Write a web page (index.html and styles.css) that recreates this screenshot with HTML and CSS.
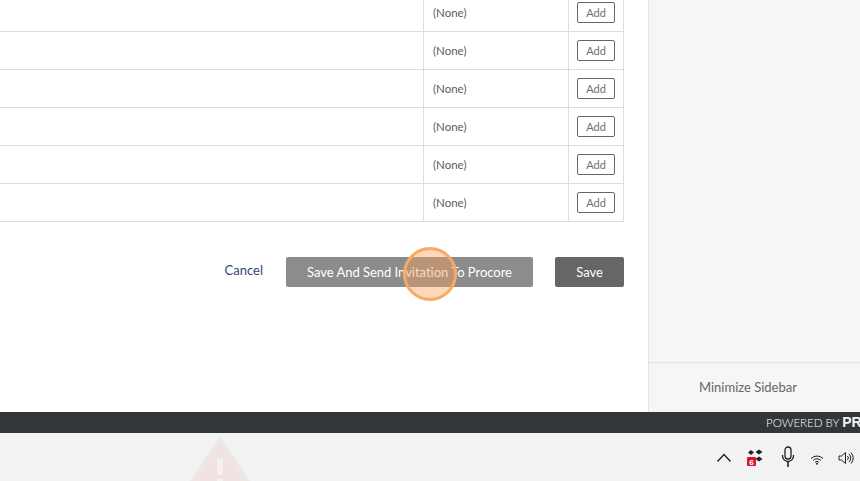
FILE: index.html
```html
<!DOCTYPE html>
<html lang="en">
<head>
    <meta charset="UTF-8">
    <title>Invite</title>
    <link rel="stylesheet" href="styles.css">
</head>
<body>

<div class="app">
    <main class="main">
        <table class="grid">
            <tr><td></td><td class="perm">(None)</td><td class="act"><button class="add">Add</button></td></tr>
            <tr><td></td><td class="perm">(None)</td><td class="act"><button class="add">Add</button></td></tr>
            <tr><td></td><td class="perm">(None)</td><td class="act"><button class="add">Add</button></td></tr>
            <tr><td></td><td class="perm">(None)</td><td class="act"><button class="add">Add</button></td></tr>
            <tr><td></td><td class="perm">(None)</td><td class="act"><button class="add">Add</button></td></tr>
            <tr><td></td><td class="perm">(None)</td><td class="act"><button class="add">Add</button></td></tr>
        </table>
        <div class="actions">
            <a class="cancel">Cancel</a>
            <button class="btn btn-send">Save And Send Invitation To Procore</button>
            <button class="btn btn-save">Save</button>
        </div>
    </main>
    <aside class="sidebar">
        <div class="sidebar-body"></div>
        <div class="minimize">Minimize Sidebar</div>
    </aside>
</div>

<div class="powered"><span>POWERED BY <b>PROCORE</b></span></div>

<div class="taskbar">
    <svg class="warning" width="100" height="48" viewBox="0 0 100 48">
        <path d="M50 6 L12 62 H88 Z" fill="#f2e3e3" stroke="#ebe8e8" stroke-width="3" stroke-linejoin="round"/>
        <rect x="47" y="25" width="6" height="17" rx="2" fill="#f6f0f0"/>
        <rect x="47" y="46" width="6" height="4" fill="#f6f0f0"/>
    </svg>
    <div class="tray">
        <svg width="16" height="12" viewBox="0 0 16 12"><path d="M1.500 10.500 L8 3.500 L14.500 10.500" fill="none" stroke="#222" stroke-width="1.400"/></svg>
        <svg class="tray-dropbox" width="20" height="20" viewBox="0 0 20 20">
            <path d="M5 3 L8 5.500 L5 8 L2 5.500 Z M13 2.500 L16.500 5 L13 7.500 L9.500 5 Z M13 9.500 L16.500 12 L13 14.500 L9.500 12 Z" fill="#222"/>
            <rect x="1" y="10" width="9" height="9" rx="1" fill="#d8172c"/>
            <text x="5.500" y="17.500" class="badge-num">6</text>
        </svg>
        <svg width="16" height="22" viewBox="0 0 16 22">
            <rect x="5" y="1" width="6" height="12" rx="3" fill="none" stroke="#222" stroke-width="1.300"/>
            <path d="M2.500 9 V10 A5.500 5.500 0 0 0 13.500 10 V9" fill="none" stroke="#222" stroke-width="1.300"/>
            <path d="M8 16 V21" stroke="#222" stroke-width="1.600"/>
        </svg>
        <svg width="14" height="10" viewBox="0 0 14 10">
            <path d="M1 3.500 A8.500 8.500 0 0 1 13 3.500 M3 5.500 A5.500 5.500 0 0 1 11 5.500 M5 7.300 A2.800 2.800 0 0 1 9 7.300" fill="none" stroke="#222"/>
            <circle cx="7" cy="8.800" r="1" fill="#222"/>
        </svg>
        <svg width="16" height="14" viewBox="0 0 16 14">
            <path d="M1 5 H3.500 L7.500 1.500 V12.500 L3.500 9 H1 Z" fill="none" stroke="#222"/>
            <path d="M9.500 5 A3 3 0 0 1 9.500 9 M11 3 A5.500 5.500 0 0 1 11 11 M13 1.500 A8 8 0 0 1 13 12.500" fill="none" stroke="#222"/>
        </svg>
    </div>
</div>

<div class="click-marker"></div>

</body>
</html>
```

FILE: styles.css
```css
html, body { margin: 0; padding: 0; }
body { width: 860px; height: 481px; overflow: hidden; position: relative; background: #fff; font-family: Lato, "Open Sans", sans-serif; }

.app { display: flex; height: 412px; }
.main { width: 648px; flex: none; overflow: hidden; }
.sidebar { width: 212px; flex: none; box-sizing: border-box; display: flex; flex-direction: column; border-left: 1px solid #e3e3e3; background: #f6f6f6; }
.sidebar-body { height: 362px; border-bottom: 1px solid #e3e3e3; }
.minimize { padding-left: 50px; line-height: 49px; font-size: 13px; color: #666; }

.grid { width: 624px; margin-top: -6px; border-collapse: collapse; table-layout: fixed; }
.grid td { height: 37px; padding: 0; border-bottom: 1px solid #ddd; }
.grid td:first-child { width: 423px; }
.perm { width: 145px; padding-left: 9px !important; border-left: 1px solid #ddd; font-size: 11.500px; color: #5c5c5c; box-sizing: border-box; }
.act { border-left: 1px solid #ddd; border-right: 1px solid #ddd; text-align: center; }
.add { width: 38px; height: 21px; padding: 0; display: block; margin: 0 auto; background: #fff; border: 1px solid #666; border-radius: 2px; font-family: Lato, sans-serif; font-size: 11px; color: #707070; }

.actions { display: flex; align-items: flex-start; width: 624px; margin-top: 35px; justify-content: flex-end; }
.cancel { margin-right: 23px; margin-top: 5px; font-size: 13px; color: #33457a; }
.btn { height: 30px; padding: 0; border: none; border-radius: 2px; color: #fff; font-family: Lato, sans-serif; font-size: 13px; letter-spacing: -0.03px; }
.btn-send { width: 247px; margin-right: 22px; background: #8c8c8c; }
.btn-save { width: 69px; background: #666; }

.powered { height: 21px; background: #323638; color: #fff; font-size: 11.500px; font-weight: 300; line-height: 21px; padding-left: 766px; white-space: nowrap; overflow: hidden; }
.powered b { font-family: "Liberation Sans", sans-serif; font-weight: 700; font-size: 14px; color: #f2f2f2; }

.taskbar { height: 48px; display: flex; justify-content: space-between; align-items: center; background: #f2f2f2; overflow: hidden; }
.warning { margin-left: 170px; align-self: flex-start; }
.tray { display: flex; align-items: center; width: 144px; height: 48px; }
.tray svg { flex: none; }
.tray-dropbox { margin-left: 14px; }
.tray svg:nth-child(3) { margin-left: 14px; }
.tray svg:nth-child(4) { margin-left: 14px; margin-top: 5px; }
.tray svg:nth-child(5) { margin-left: 14px; margin-top: 2px; }
.badge-num { font-family: "Liberation Sans", sans-serif; font-size: 8px; font-weight: 700; fill: #fff; text-anchor: middle; }

.click-marker { position: absolute; left: 403px; top: 247px; width: 54px; height: 54px; box-sizing: border-box; border: 3px solid #f8aa63; border-radius: 50%; background: rgba(250, 160, 90, 0.42); }
```
